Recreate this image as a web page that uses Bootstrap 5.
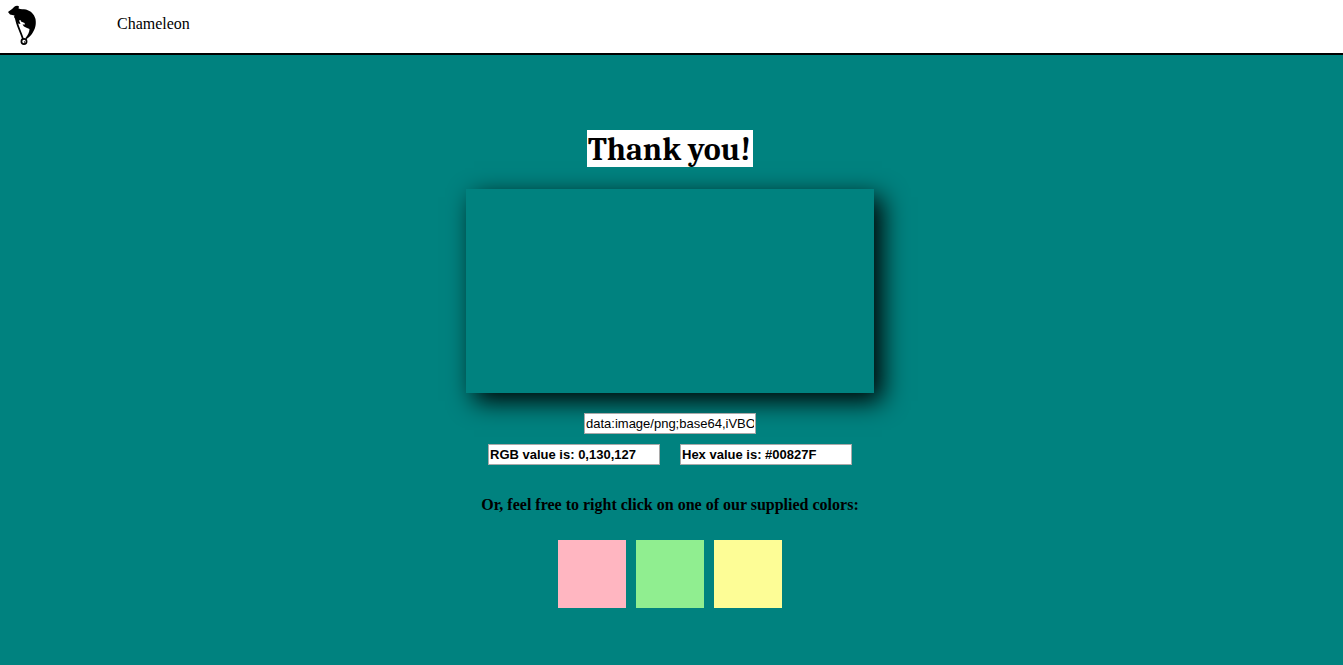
<!DOCTYPE html>
<html lang="en">
<head>
<meta charset="utf-8">
<meta name="viewport" content="width=device-width, initial-scale=1">
<title>Chameleon</title>
<link href="https://cdn.jsdelivr.net/npm/bootstrap@5.3.0/dist/css/bootstrap.min.css" rel="stylesheet">
<style>
  body { background: #00827f; color: #000; font: 16px/20px "Liberation Serif", serif; }
  .topbar { background: #fff; border-bottom: 2px solid #000; height: 55px; padding: 4px 8px; }
  .logo { width: 29px; height: 42px; }
  .brand-link { color: #000; margin-left: 80px; padding-top: 10px; text-decoration: none; }
  .stage { padding: 75px 3px 57px 0; }
  .thanks { background: #fff; font: bold 32px/35px Cambria, Caladea, "Noto Serif", "Liberation Serif", serif; padding: 2px 2px 0 1px; }
  .preview { width: 408px; max-width: 100%; height: 204px; margin-top: 22px; background: #00827f; box-shadow: 8px 8px 24px #000; }
  .field { width: 172px; height: 21px; padding: 1px; border: 1px solid #a9a9a9; border-radius: 0; background: #fff; color: #000; font: 13px/15px "Liberation Sans", sans-serif; }
  .swatches { gap: 10px; margin-top: 25px; }
  .swatch { width: 68px; height: 68px; }
  .pink { background: #ffb6c1; }
  .green { background: #90ee90; }
  .yellow { background: #fdfd96; }
  .values { gap: 20px; margin-top: 10px; }
  .source { margin-top: 20px; }
  .hint { margin-top: 30px; }
</style>
</head>
<body>
<header class="topbar d-flex align-items-start">
  <svg class="logo" viewBox="8 4 29 42" aria-hidden="true">
    <path d="M8 12 C10 10 13 9 14 7 C16 5.500 18 5.500 19 6.500 L18.500 8.500 C21 9.500 23 9 26 9.500 C31 11 34 14 35.500 19 C36.500 25 35 29 32.500 33 C31 36 28 38 26 39.500 L25.500 38 C28 35 29.500 32 29.500 29 L27 28 L24 26.500 L22.500 24.500 L25 24.500 L24.500 23 L21 21.500 L20.500 20 L19 20.500 L20.500 24 L18 23.500 C17 21 15 19 14 17 L14.500 15.500 L10 14.500 Z"/>
    <path d="M16 18 C16 23 20 30 23 39" fill="none" stroke="#000" stroke-width="1.800"/>
    <circle cx="24" cy="41.500" r="2.600" fill="none" stroke="#000" stroke-width="1.700"/>
    <circle cx="24.500" cy="42" r="0.700"/>
  </svg>
  <a class="brand-link" href="#">Chameleon</a>
</header>
<main class="stage d-flex flex-column align-items-center">
  <h1 class="thanks mb-0">Thank you!</h1>
  <div class="preview"></div>
  <input class="field source" type="text" aria-label="Image data" value="data:image/png;base64,iVBORw0KGgoAAAANSUhEUgAA">
  <div class="values d-flex flex-wrap justify-content-center">
    <input class="field fw-bold" type="text" aria-label="RGB value" value="RGB value is: 0,130,127">
    <input class="field fw-bold" type="text" aria-label="Hex value" value="Hex value is: #00827F">
  </div>
  <p class="hint fw-bold mb-0">Or, feel free to right click on one of our supplied colors:</p>
  <div class="swatches d-flex">
    <div class="swatch pink"></div>
    <div class="swatch green"></div>
    <div class="swatch yellow"></div>
  </div>
</main>
<script src="https://cdn.jsdelivr.net/npm/bootstrap@5.3.0/dist/js/bootstrap.bundle.min.js"></script>
</body>
</html>
